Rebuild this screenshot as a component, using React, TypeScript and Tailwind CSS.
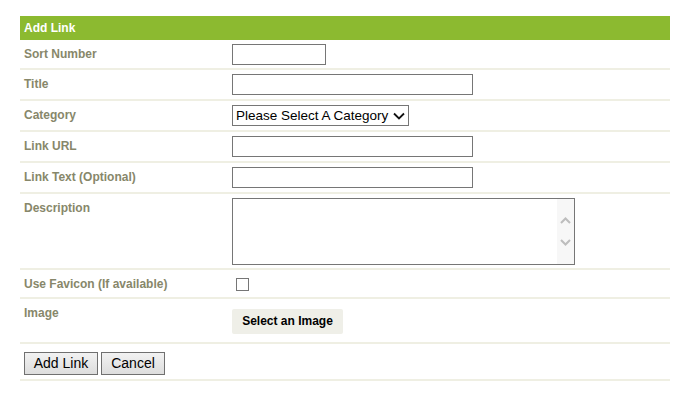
import { useState } from 'react';

const label = "text-[12px] leading-[14px] font-bold text-[#87876a] pt-[7px] pl-[4px] w-[208px] shrink-0";
const rowCls = "flex border-b-2 border-[#efefe3]";
const inputCls = "block h-[21px] border border-[#767676] bg-white px-1 text-[14px] outline-none";

function Row({ title, children, cls = "py-[4px]" }: { title: string; children: React.ReactNode; cls?: string }) {
  return (
    <div className={rowCls}>
      <div className={label}>{title}</div>
      <div className={`pl-[4px] ${cls}`}>{children}</div>
    </div>
  );
}

export default function App() {
  const [fav, setFav] = useState(false);

  return (
    <div className="min-h-[400px] bg-white pt-[16px] px-[20px] font-['Liberation_Sans',Arial,sans-serif]">
      <div className="w-[650px]">
        {/* Header */}
        <div className="h-[24px] bg-[#8cba30] pl-[4px] text-[12px] font-bold leading-[24px] text-white">Add Link</div>

        <Row title="Sort Number" cls="pt-[4px] pb-[3px]">
          <input className={`${inputCls} w-[94px]`} />
        </Row>
        <Row title="Title">
          <input className={`${inputCls} w-[241px]`} />
        </Row>
        <Row title="Category">
          <div className="relative w-[177px]">
            <select className="block h-[21px] w-full appearance-none border border-[#767676] bg-white pl-[3px] text-[13.5px] leading-[19px] text-black outline-none">
              <option>Please Select A Category</option>
            </select>
            <svg className="pointer-events-none absolute right-[4px] top-[7px]" width="12" height="8" viewBox="0 0 12 8">
              <path d="M1 1.5 L6 6.5 L11 1.5" fill="none" stroke="#111" strokeWidth="1.8" />
            </svg>
          </div>
        </Row>
        <Row title="Link URL">
          <input className={`${inputCls} w-[241px]`} />
        </Row>
        <Row title="Link Text (Optional)">
          <input className={`${inputCls} w-[241px]`} />
        </Row>
        <Row title="Description" cls="pt-[4px] pb-[3px]">
          <div className="flex h-[67px] w-[343px] border border-[#767676] bg-white">
            <textarea className="h-full flex-1 resize-none p-1 text-[14px] outline-none" />
            <div className="flex w-[17px] flex-col items-center justify-center gap-[15px] bg-[#f7f7f7]">
              <svg width="11" height="7" viewBox="0 0 11 7">
                <path d="M1 6 L5.5 1.5 L10 6" fill="none" stroke="#bdbdbd" strokeWidth="2" />
              </svg>
              <svg width="11" height="7" viewBox="0 0 11 7">
                <path d="M1 1 L5.5 5.5 L10 1" fill="none" stroke="#bdbdbd" strokeWidth="2" />
              </svg>
            </div>
          </div>
        </Row>
        <Row title="Use Favicon (If available)" cls="pt-[8px] pb-[6px]">
          <label className="ml-[4px] block">
            <input type="checkbox" checked={fav} onChange={e => setFav(e.target.checked)} className="peer sr-only" />
            <span className="block h-[13px] w-[13px] border border-[#767676] bg-white peer-checked:bg-[#8cba30]" />
          </label>
        </Row>
        <Row title="Image" cls="pt-[9px] pb-[8px]">
          <button className="h-[25px] w-[111px] rounded-[2px] bg-[#efefe8] text-[12px] font-bold text-black">Select an Image</button>
        </Row>

        <div className="flex gap-[3px] border-b-2 border-[#efefe3] pl-[4px] pt-[8px] pb-[4px]">
          <button className="h-[23px] w-[74px] border border-[#707070] bg-gradient-to-b from-[#f2f2f2] to-[#dddddd] text-[14px] text-black">Add Link</button>
          <button className="h-[23px] w-[64px] border border-[#707070] bg-gradient-to-b from-[#f2f2f2] to-[#dddddd] text-[14px] text-black">Cancel</button>
        </div>
      </div>
    </div>
  );
}
